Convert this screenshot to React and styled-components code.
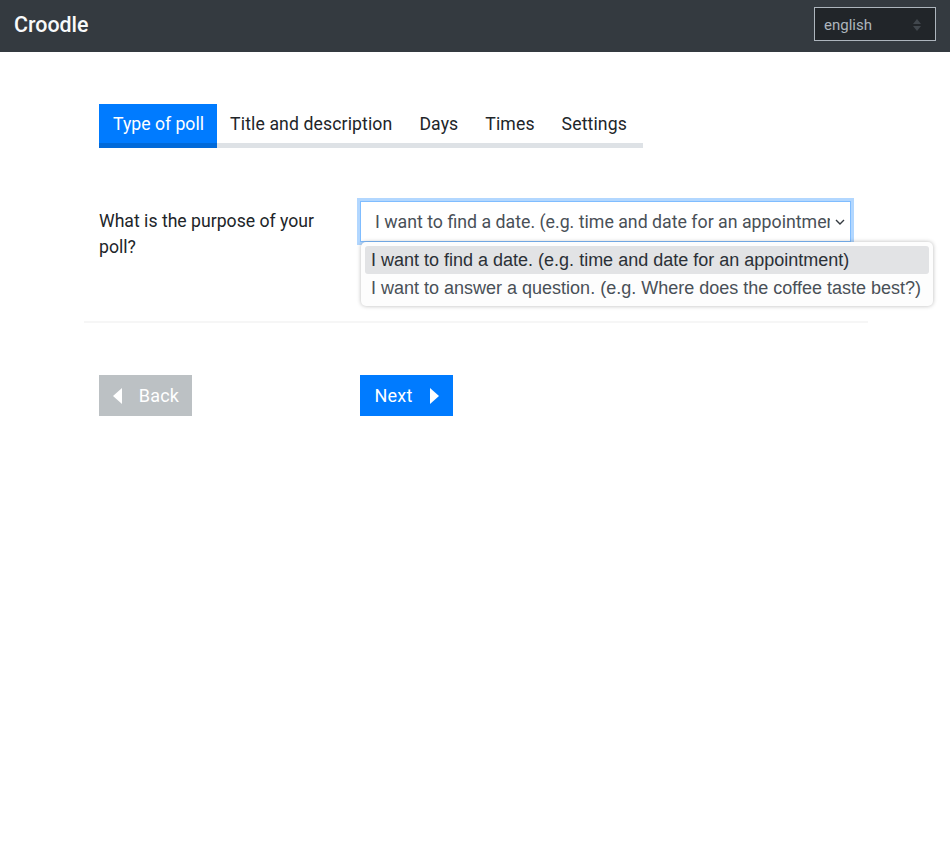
import React from "react";
import styled, { createGlobalStyle } from "styled-components";

const Global = createGlobalStyle`
  html, body { margin: 0; padding: 0; background: #fff; }
  body { font-family: Roboto, "Liberation Sans", sans-serif; color: #212529; }
  * { box-sizing: border-box; }
`;

const Header = styled.header`
  height: 52px;
  background: #343a40;
  display: flex;
  align-items: center;
  justify-content: space-between;
  padding: 0 14px 4px;
`;
const Brand = styled.div`
  font-size: 21.4px;
  font-weight: 500;
  color: #f8f9fa;
`;
const Lang = styled.div`
  width: 122px;
  height: 34px;
  background: #212529;
  border: 1px solid #adb5bd;
  color: #adb5bd;
  font-size: 15px;
  padding: 1px 14px 0 9px;
  display: flex;
  align-items: center;
  justify-content: space-between;
`;
const Main = styled.main`
  width: 784px;
  margin-left: 84px;
  padding-top: 52px;
`;
const Tabs = styled.nav`
  display: flex;
  width: 544px;
  margin-left: 15px;
  border-bottom: 5px solid #dee2e6;
  height: 44px;
`;
const Tab = styled.div`
  flex: none;
  height: 44px;
  padding: 0 ${(p) => (p.$active ? "12.6px" : "13.5px")} 0 ${(p) => (p.$active ? "14px" : "13.5px")};
  display: flex;
  align-items: center;
  font-size: 17.65px;
  letter-spacing: ${(p) => (p.$active ? "0" : "0.11px")};
  white-space: nowrap;
  color: ${(p) => (p.$active ? "#fff" : "#212529")};
  background: ${(p) => (p.$active ? "#007bff" : "transparent")};
  border-bottom: 5px solid ${(p) => (p.$active ? "#0069d9" : "transparent")};
`;
const Row = styled.section`
  display: grid;
  grid-template-columns: 261px 1fr;
  margin-top: 53px;
  padding-bottom: 61px;
  border-bottom: 2px solid #f6f6f6;
`;
const Label = styled.div`
  padding-left: 15px;
  padding-right: 15px;
  font-size: 17.65px;
  line-height: 26px;
  padding-top: 7px;
`;
const Field = styled.div`
  position: relative;
  padding-left: 15px;
`;
const Select = styled.div`
  width: 491px;
  height: 41px;
  border: 1px solid #80bdff;
  box-shadow: 0 0 0 3px rgba(0, 123, 255, 0.3);
  background: #fff;
  display: flex;
  align-items: center;
  padding: 0 5px 0 14px;
  font-size: 17.75px;
  color: #495057;
`;
const SelectText = styled.span`
  flex: 1;
  overflow: hidden;
  white-space: nowrap;
  margin-right: 5px;
`;
const Menu = styled.div`
  position: absolute;
  left: 16px;
  top: 41px;
  width: 572px;
  height: 64px;
  padding: 4px;
  background: #fdfdfd;
  border-radius: 5px;
  box-shadow: 0 0 4px rgba(0, 0, 0, 0.28);
  font-family: "Liberation Sans", Arial, sans-serif;
  font-size: 18px;
`;
const Option = styled.div`
  height: 28px;
  line-height: 28px;
  padding-left: 6px;
  border-radius: 3px;
  white-space: nowrap;
  color: ${(p) => (p.$active ? "#2b3036" : "#495057")};
  background: ${(p) => (p.$active ? "#e2e3e5" : "transparent")};
`;
const Actions = styled.div`
  display: grid;
  grid-template-columns: 261px 1fr;
  margin-top: 52px;
`;
const Cell = styled.div`
  padding-left: 15px;
`;
const Button = styled.div`
  width: 93px;
  height: 41px;
  display: flex;
  align-items: center;
  justify-content: center;
  gap: 17px;
  padding-left: ${(p) => (p.$muted ? "1px" : "0")};
  font-size: 18px;
  letter-spacing: 0.2px;
  color: #fff;
  background: ${(p) => (p.$muted ? "#bcc1c4" : "#007bff")};
`;

const Left = () => (
  <svg width="9" height="16" viewBox="0 0 9 16"><path d="M9 0v16L0 8z" fill="#fff" /></svg>
);
const Right = () => (
  <svg width="9" height="16" viewBox="0 0 9 16"><path d="M0 0v16l9-8z" fill="#fff" /></svg>
);
const Chevron = () => (
  <svg width="10" height="6" viewBox="0 0 10 6"><path d="M1 1l4 4 4-4" fill="none" stroke="#343a40" strokeWidth="1.4" /></svg>
);
const Updown = () => (
  <svg width="8" height="12" viewBox="0 0 8 12"><path d="M4 0l4 5H0zM4 12L0 7h8z" fill="#41474d" /></svg>
);

export default function App() {
  return (
    <>
      <Global />
      <Header>
        <Brand>Croodle</Brand>
        <Lang>english<Updown /></Lang>
      </Header>
      <Main>
        <Tabs>
          <Tab $active>Type of poll</Tab>
          <Tab>Title and description</Tab>
          <Tab>Days</Tab>
          <Tab>Times</Tab>
          <Tab>Settings</Tab>
        </Tabs>
        <Row>
          <Label>What is the purpose of your poll?</Label>
          <Field>
            <Select>
              <SelectText>I want to find a date. (e.g. time and date for an appointment)</SelectText>
              <Chevron />
            </Select>
            <Menu>
              <Option $active>I want to find a date. (e.g. time and date for an appointment)</Option>
              <Option>I want to answer a question. (e.g. Where does the coffee taste best?)</Option>
            </Menu>
          </Field>
        </Row>
        <Actions>
          <Cell><Button $muted><Left />Back</Button></Cell>
          <Cell><Button>Next<Right /></Button></Cell>
        </Actions>
      </Main>
    </>
  );
}
